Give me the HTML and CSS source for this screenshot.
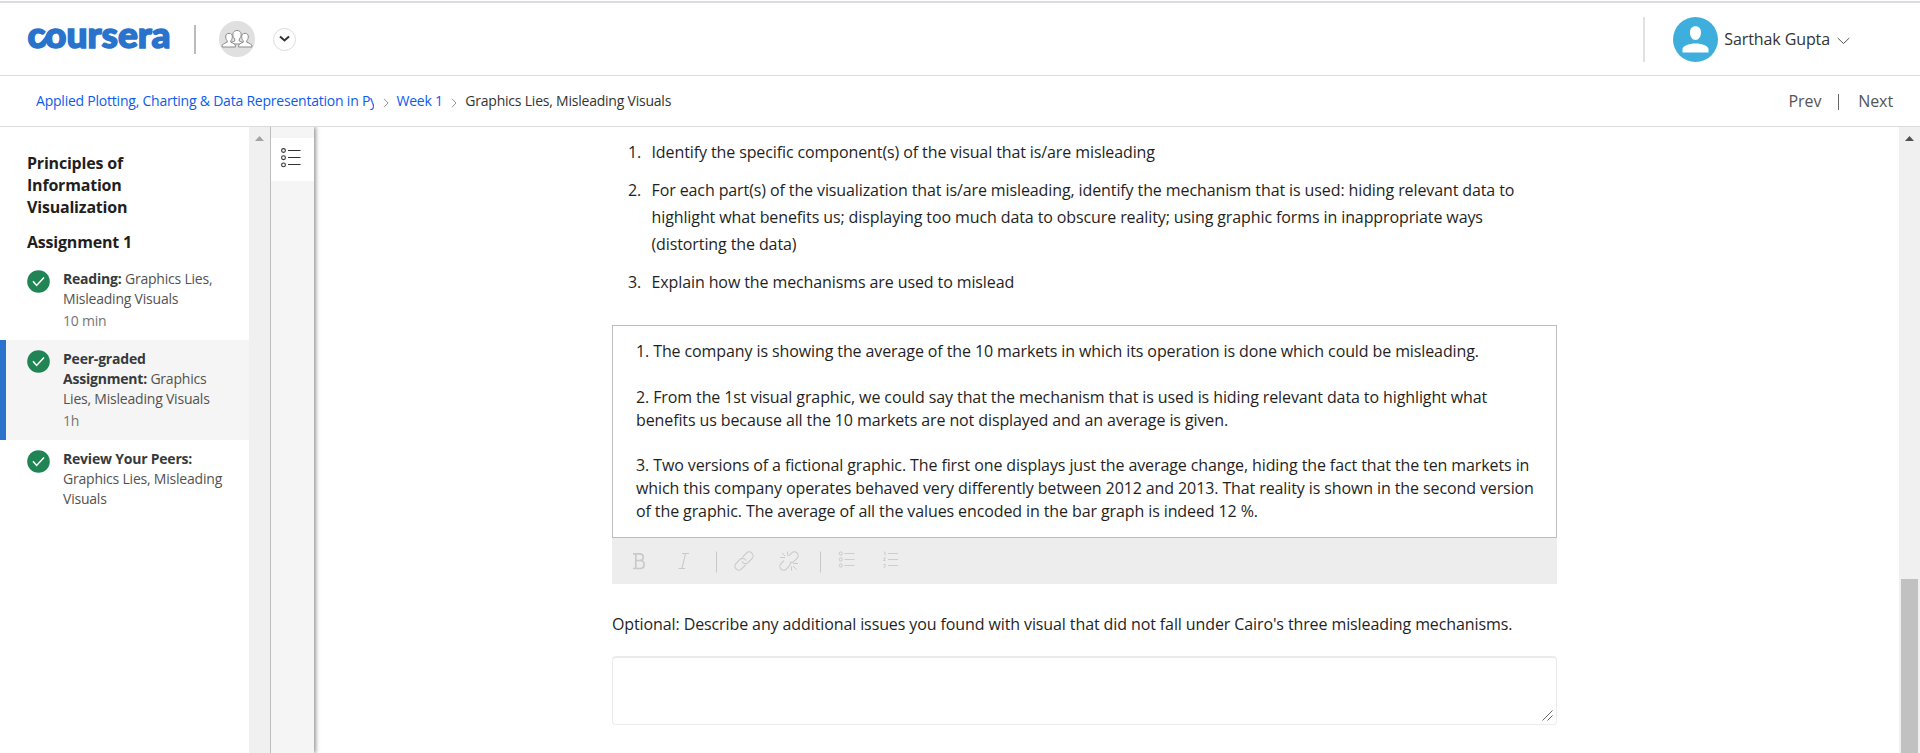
FILE: index.html
```html
<!DOCTYPE html>
<html lang="en">
<head>
<meta charset="utf-8">
<title>Graphics Lies, Misleading Visuals | Coursera</title>
<link rel="stylesheet" href="styles.css">
</head>
<body>
<svg class="defs" width="0" height="0">
  <symbol id="check" viewBox="0 0 23 23"><circle cx="11.5" cy="11.5" r="11.3" fill="#208454"/><path d="M6 11.3l3.6 4.1 7.4-8" fill="none" stroke="#fff" stroke-width="1.5"/></symbol>
</svg>
<header class="header">
  <svg class="logo" width="146" height="30" viewBox="0 0 146 30">
    <text class="logo-text" x="0.5" y="24" textLength="143" lengthAdjust="spacingAndGlyphs">coursera</text>
    <path d="M10 22c5 0 7.500-4 10-7.600s4.500-7.400 9-7.400" fill="none" stroke="#2a73cc" stroke-width="5.200"/>
  </svg>
  <span class="logo-rule"></span>
  <span class="group">
    <svg width="32" height="20" viewBox="0 0 32 20" fill="#fff" stroke="#8b8b8b" stroke-width="1">
      <path d="M9 15c0-2 3-2 4.700-3v-2c-3-3-2.500-8.500 2.300-8.500s5.300 5.500 2.300 8.500v2c1.700 1 4.700 1 4.700 3z"/>
      <path d="M1 18c0-3 2-3.500 5.200-4.700v-1.500c-2.500-3-2-7.500 1.800-7.500s4.300 4.500 1.800 7.500v1.500c3.200 1.200 4.700 1.700 4.700 4.700z"/>
      <path d="M17.500 18c0-3 1.500-3.500 4.700-4.700v-1.500c-2.500-3-2-7.500 1.800-7.500s4.300 4.500 1.800 7.500v1.500c3.200 1.200 5.200 1.700 5.200 4.700z"/>
    </svg>
  </span>
  <span class="switch"><svg width="11" height="8" viewBox="0 0 11 8"><path d="M1 1.500l4.500 4 4.500-4" fill="none" stroke="#333" stroke-width="2"/></svg></span>
  <div class="account">
    <svg class="avatar" width="45" height="45" viewBox="0 0 45 45"><circle cx="22.500" cy="22.500" r="22.500" fill="#3eafdc"/><path d="M22.500 9.300c3.500 0 5.500 2.400 5.500 6.200 0 4-2.300 7.500-5.500 7.500S17 19.500 17 15.500c0-3.800 2-6.200 5.500-6.200zM9.500 35.500v-3.500c0-3 6-5.500 13-5.500s13 2.500 13 5.500v3.500z" fill="#fff"/></svg>
    <span class="user">Sarthak Gupta</span>
    <svg class="caret" width="13" height="8" viewBox="0 0 13 8"><path d="M.7 1l5.800 5.500L12.300 1" fill="none" stroke="#555" stroke-width="1"/></svg>
  </div>
</header>
<nav class="crumbs">
  <a class="course">Applied Plotting, Charting &amp; Data Representation in Python</a>
  <svg class="sep" width="6" height="10" viewBox="0 0 6 10"><path d="M1 .8l4 4.200-4 4.200" fill="none" stroke="#888" stroke-width=".9"/></svg>
  <a>Week 1</a>
  <svg class="sep" width="6" height="10" viewBox="0 0 6 10"><path d="M1 .8l4 4.200-4 4.200" fill="none" stroke="#888" stroke-width=".9"/></svg>
  <span class="current">Graphics Lies, Misleading Visuals</span>
  <div class="pager"><span>Prev</span><i class="pager-rule"></i><span>Next</span></div>
</nav>
<div class="body">
  <aside class="sidebar">
    <h2 class="module">Principles of Information Visualization</h2>
    <h3 class="lesson">Assignment 1</h3>
    <div class="item"><svg class="check" width="23" height="23"><use href="#check"/></svg><div><div><b>Reading:</b> Graphics Lies, Misleading Visuals</div><div class="time">10 min</div></div></div>
    <div class="item active"><svg class="check" width="23" height="23"><use href="#check"/></svg><div><div><b>Peer-graded Assignment:</b> Graphics Lies, Misleading Visuals</div><div class="time">1h</div></div></div>
    <div class="item"><svg class="check" width="23" height="23"><use href="#check"/></svg><div><b>Review Your Peers:</b> Graphics Lies, Misleading Visuals</div></div>
  </aside>
  <div class="scroll side-scroll"><svg width="9" height="5" viewBox="0 0 9 5"><path d="M0 5l4.500-5L9 5z" fill="#a3a3a3"/></svg></div>
  <div class="rail">
    <div class="rail-tab"><svg width="20" height="20" viewBox="0 0 20 20" fill="none" stroke="#333" stroke-width="1.100"><circle cx="2.500" cy="2.500" r="1.900"/><circle cx="2.500" cy="9.700" r="1.900"/><circle cx="2.500" cy="16.900" r="1.900"/><path d="M7 2.500h12.500M7 9.500h12.500M7 16.500h12.500"/></svg></div>
  </div>
  <main class="main">
    <div class="content">
      <ol class="tasks">
        <li><span class="num">1.</span><span>Identify the specific component(s) of the visual that is/are misleading</span></li>
        <li><span class="num">2.</span><span>For each part(s) of the visualization that is/are misleading, identify the mechanism that is used: hiding relevant data to<br>highlight what benefits us; displaying too much data to obscure reality; using graphic forms in inappropriate ways<br>(distorting the data)</span></li>
        <li><span class="num">3.</span><span>Explain how the mechanisms are used to mislead</span></li>
      </ol>
      <div class="answer">1. The company is showing the average of the 10 markets in which its operation is done which could be misleading.<br><br>2. From the 1st visual graphic, we could say that the mechanism that is used is hiding relevant data to highlight what<br>benefits us because all the 10 markets are not displayed and an average is given.<br><br>3. Two versions of a fictional graphic. The first one displays just the average change, hiding the fact that the ten markets in<br>which this company operates behaved very differently between 2012 and 2013. That reality is shown in the second version<br>of the graphic. The average of all the values encoded in the bar graph is indeed 12 %.</div>
      <div class="toolbar">
        <svg width="290" height="46" viewBox="0 0 290 46" fill="none" stroke="#c9c9c9">
          <path stroke-width="1.700" d="M21 15.800h6.500c5 0 5 6.700 0 6.700h-3.500 4c5.500 0 5.500 8 0 8H21M23.800 16v14.500"/>
          <path d="M70 15.500h7M66.500 30.500h6.500M73.500 15.500l-3.500 15" stroke-width="1.100"/>
          <path d="M104.500 13.500v21M208.500 13.500v21"/>
          <g transform="translate(132 23) rotate(-45) scale(1.120)"><path d="M-1.500 3.500h-5a3.500 3.500 0 0 1 0-7h5a3.500 3.500 0 0 1 3.200 4.500"/><path d="M1.500-3.500h5a3.500 3.500 0 0 1 0 7h-5a3.500 3.500 0 0 1-3.200-4.500"/></g>
          <g transform="translate(177 23) rotate(-45) scale(1.080)"><path d="M-3-3.500h-4a3.500 3.500 0 0 0 0 7h4a3.500 3.500 0 0 0 3-2M3-3.500h4a3.500 3.500 0 0 1 0 7H3a3.500 3.500 0 0 1-3-2"/></g>
          <path d="M168 19.500h5M170 15l3 3M175.500 13.500v4M181 25.500h5M181 28l3.500 3.500M179.500 28.500v4"/>
          <circle cx="228.800" cy="15.500" r="1.600"/><circle cx="228.800" cy="21.500" r="1.600"/><circle cx="228.800" cy="27.500" r="1.600"/>
          <path d="M232.500 15.500h10M232.500 21.500h10M232.500 27.500h10M276 15.500h10M276 21.500h10M276 27.500h10M272 14.500l1-.7v3.500M271.500 20h2l-2 2.500h2M271.500 26.500h2l-1 1.200 1 1-2 .8" stroke-width=".9"/>
        </svg>
      </div>
      <p class="optional">Optional: Describe any additional issues you found with visual that did not fall under Cairo's three misleading mechanisms.</p>
      <div class="textarea"><svg width="11" height="11" viewBox="0 0 11 11"><path d="M.5 10.500l10-10M5.500 10.500l5-5" fill="none" stroke="#666" stroke-width="1"/></svg></div>
    </div>
  </main>
  <div class="scroll main-scroll"><svg width="9" height="5" viewBox="0 0 9 5"><path d="M0 5l4.500-5L9 5z" fill="#505050"/></svg><div class="thumb"></div></div>
</div>
</body>
</html>
```
FILE: styles.css
```css
* { box-sizing: border-box; }
body {
  margin: 0;
  height: 753px;
  overflow: hidden;
  display: flex;
  flex-direction: column;
  background: #fff;
  color: #1f1f1f;
  font: 16px/22px "Open Sans", "Noto Sans", sans-serif;
  letter-spacing: -.105px;
}
svg { display: block; flex: none; overflow: visible; }
.defs { position: absolute; }
.header {
  height: 75px;
  flex: none;
  margin-top: 1px;
  border-top: 2px solid #dadce2;
  border-bottom: 1px solid #dcdcdc;
  padding: 0 70px 0 27px;
  display: flex;
  align-items: center;
}
.logo-text { font: 900 35.500px Lato, sans-serif; letter-spacing: 0; fill: #2a73cc; stroke: #2a73cc; stroke-width: 1.500; }
.logo-rule { width: 2px; height: 29px; margin-left: 21px; background: #bbb; }
.group {
  width: 36px; height: 36px; margin-left: 23px; border-radius: 50%; background: #e0e0e0;
  display: flex; align-items: center; justify-content: center;
}
.switch {
  width: 23px; height: 23px; margin-left: 18px; border: 1px solid #ddd; border-radius: 50%;
  display: flex; align-items: center; justify-content: center;
}
.account {
  margin-left: auto; height: 45px; padding-left: 28px; border-left: 2px solid #e1e1e1;
  display: flex; align-items: center;
}
.user { margin: 0 7px 0 6px; color: #333; }
.caret { margin-top: 3px; }
.crumbs {
  height: 51px;
  flex: none;
  border-bottom: 1px solid #dcdcdc;
  padding: 0 27px 0 36px;
  display: flex;
  align-items: center;
  font-size: 14px;
  letter-spacing: -.22px;
  color: #333;
}
.crumbs a { color: #0b5ced; white-space: nowrap; }
.course { width: 338px; overflow: hidden; }
.sep { margin: 3px 8px 0 8.500px; }
.pager { margin-left: auto; display: flex; align-items: center; font-size: 16px; letter-spacing: -.1px; color: #555; }
.pager-rule { width: 1px; height: 16px; margin: 2px 19px 0 17px; background: #666; }
.body { flex: 1; min-height: 0; display: flex; }
.sidebar { width: 249px; padding-top: 25px; }
.module, .lesson { margin: 0 100px 13px 27px; font-size: 16px; font-weight: 700; line-height: 22px; letter-spacing: -.2px; }
.lesson { margin-bottom: 7px; }
.item {
  display: flex; gap: 13px; padding: 9px 20px 9px 21px; border-left: 6px solid transparent;
  font-size: 14px; line-height: 20px; letter-spacing: -.21px; color: #525252;
}
.item b { font-weight: 700; color: #373a3c; }
.item.active { background: #f5f5f5; border-left-color: #2a73cc; }
.check { margin-top: 1px; }
.time { margin-top: 2px; color: #757575; }
.scroll { width: 21px; background: #f0f0f0; padding-top: 9px; display: flex; flex-direction: column; align-items: center; }
.rail {
  width: 44px; padding-top: 11px; background: #f5f5f5; border-left: 1px solid #bdbdbd;
  box-shadow: 2px 0 4px rgba(0, 0, 0, .4); clip-path: inset(0 -8px 0 0);
}
.rail-tab { height: 43px; padding: 10px 0 0 10px; background: #fff; }
.main { flex: 1; padding-left: 298px; }
.content { width: 945px; }
.tasks { list-style: none; margin: 0; padding: 12px 0 0 16px; line-height: 27px; }
.tasks li { display: flex; margin-bottom: 11px; white-space: nowrap; }
.num { width: 23.500px; }
.answer {
  height: 213px; margin-top: 29px; padding: 14px 0 0 23px; border: 1px solid #bdbdbd;
  line-height: 22.857px; white-space: nowrap;
}
.toolbar { height: 46px; background: #ededed; }
.optional { margin: 29px 0 21px; white-space: nowrap; }
.textarea {
  height: 69px; padding: 0 3px 3px 0; border: 1px solid #ebebeb; border-top-width: 2px; border-radius: 4px;
  display: flex; justify-content: flex-end; align-items: flex-end;
}
.thumb { width: 17px; flex: 1; margin-top: 438px; background: #c1c1c1; }
```
